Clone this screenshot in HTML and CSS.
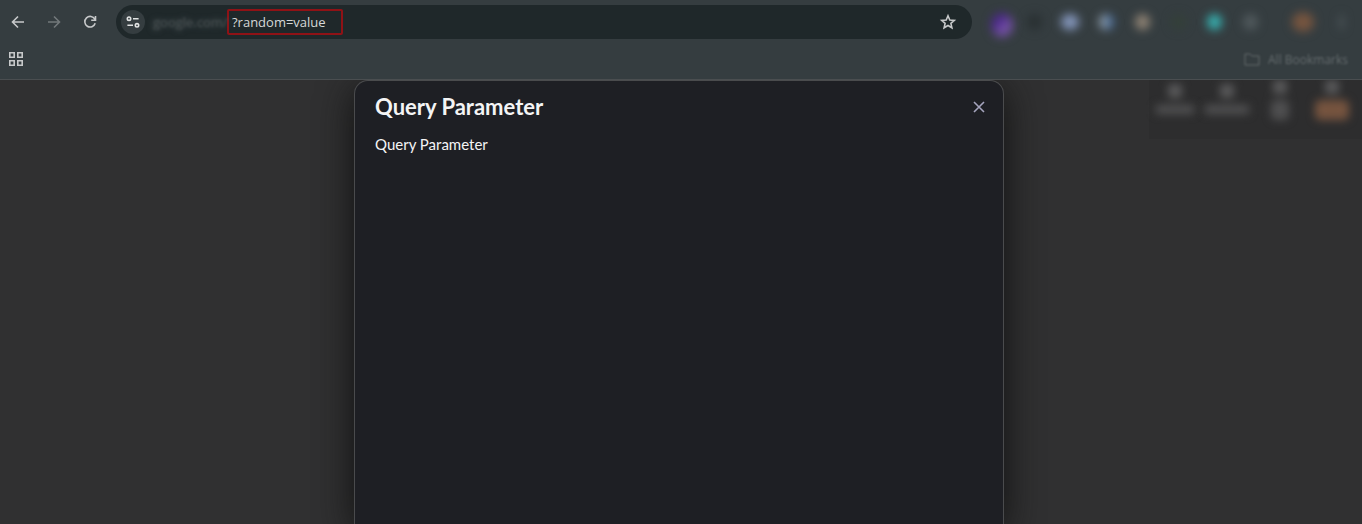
FILE: index.html
```html
<!DOCTYPE html>
<html lang="en">
<head>
  <meta charset="UTF-8">
  <title>Query Parameter</title>
  <link rel="stylesheet" href="styles.css">
</head>
<body>

  <header class="browser">
    <div class="toolbar">
      <button class="nav-btn" aria-label="Back">
        <svg width="16" height="16" viewBox="0 0 16 16"><path d="M14 8H3M8 2.5L2.5 8L8 13.5"/></svg>
      </button>
      <button class="nav-btn" aria-label="Forward" disabled>
        <svg width="16" height="16" viewBox="0 0 16 16"><path d="M2 8H13M8 2.5L13.5 8L8 13.5"/></svg>
      </button>
      <button class="nav-btn" aria-label="Reload">
        <svg width="16" height="16" viewBox="0 0 16 16"><path d="M12.8 5.2A5.3 5.3 0 1 0 13.2 9.3M13.5 2V6.3H9.2"/></svg>
      </button>

      <div class="omnibox">
        <button class="site-info" aria-label="Site information">
          <svg width="14" height="14" viewBox="0 0 14 14"><circle cx="3" cy="3.7" r="1.7"/><path d="M7 3.7H12.6M1.4 10.3H7"/><circle cx="11" cy="10.3" r="1.7"/></svg>
        </button>
        <span class="host">google.com/</span>
        <input class="query" type="text" value="?random=value" aria-label="Address">
        <button class="star" aria-label="Bookmark this page">
          <svg width="18" height="18" viewBox="0 0 18 18"><path d="M9 2.8L10.8 7L15.3 7.4L11.9 10.4L12.9 14.8L9 12.5L5.1 14.8L6.1 10.4L2.7 7.4L7.2 7Z"/></svg>
        </button>
      </div>

      <div class="extensions">
        <button class="ext" aria-label="Extension 1"><i class="dot purple"></i></button>
        <button class="ext" aria-label="Extension 2"><i class="dot dark"></i></button>
        <button class="ext" aria-label="Extension 3"><i class="dot blue"></i></button>
        <button class="ext" aria-label="Extension 4"><i class="dot half"></i></button>
        <button class="ext" aria-label="Extension 5"><i class="dot sand"></i></button>
        <button class="ext" aria-label="Extension 6"><i class="dot green"></i></button>
        <button class="ext" aria-label="Extension 7"><i class="dot teal"></i></button>
        <button class="ext" aria-label="Extensions"><i class="dot gray"></i></button>
        <button class="ext profile" aria-label="Profile"><i class="dot orange"></i></button>
        <button class="ext" aria-label="Menu"><i class="dot menu"></i></button>
      </div>
    </div>

    <div class="bookmarks">
      <button class="apps" aria-label="Apps">
        <svg width="14" height="14" viewBox="0 0 14 14"><path d="M.8 .8H5.2V5.2H.8ZM8.8 .8H13.2V5.2H8.8ZM.8 8.8H5.2V13.2H.8ZM8.8 8.8H13.2V13.2H8.8Z"/></svg>
      </button>
      <button class="all-bookmarks">
        <svg width="16" height="14" viewBox="0 0 16 14"><path d="M1 2H6L8 4H15V13H1Z"/></svg>
        <span>All Bookmarks</span>
      </button>
    </div>
  </header>

  <main class="page">
    <nav class="menu-bar">
      <a class="menu-item" href="#" aria-label="Menu item 1"><i class="mark"></i><i class="label"></i></a>
      <a class="menu-item" href="#" aria-label="Menu item 2"><i class="mark"></i><i class="label wide"></i></a>
      <a class="menu-item high" href="#" aria-label="Menu item 3"><i class="mark"></i><i class="block"></i></a>
      <a class="menu-item high" href="#" aria-label="Menu item 4"><i class="mark"></i><i class="block warm"></i></a>
    </nav>

    <section class="modal" role="dialog" aria-labelledby="modal-title">
      <div class="modal-head">
        <h1 id="modal-title">Query Parameter</h1>
        <button class="close" aria-label="Close">
          <svg width="12" height="12" viewBox="0 0 12 12"><path d="M1 1L11 11M11 1L1 11"/></svg>
        </button>
      </div>
      <p>Query Parameter</p>
    </section>
  </main>

</body>
</html>
```

FILE: styles.css
```css
* { box-sizing: border-box; }
body { margin: 0; min-height: 100vh; display: flex; flex-direction: column; overflow: hidden; background: #303031; font-family: Lato, sans-serif; }
button { display: flex; align-items: center; justify-content: center; padding: 0; border: none; background: none; color: #c7c9ca; cursor: pointer; }
svg { fill: none; stroke: currentColor; stroke-width: 1.6; }

/* browser bars */
.browser { background: #353d40; border-bottom: 1px solid #4a4e50; font-family: "Open Sans", sans-serif; }
.toolbar { display: flex; align-items: center; height: 44px; padding-right: 3px; }
.nav-btn { width: 36px; height: 36px; }
.nav-btn:disabled { color: #72787a; }
.omnibox { flex: 1; display: flex; align-items: center; height: 34px; margin-left: 8px; padding: 0 12px 0 5px; border-radius: 17px; background: #1f282a; }
.site-info { width: 24px; height: 24px; border-radius: 50%; background: #353d40; color: #e1e3e3; }
.host { margin-left: 8px; width: 74px; font-size: 13px; color: #424a4c; text-shadow: 0 0 6px #5d6567; filter: blur(1px); }
.query { width: 116px; height: 26px; padding: 0 3px; border: 2px solid #8f1216; border-radius: 2px; background: none; color: #d5d8d8; font: 13px "Open Sans", sans-serif; outline: none; }
.star { margin-left: auto; width: 24px; height: 24px; }

.extensions { display: flex; margin-left: 8px; }
.ext { width: 36px; height: 36px; }
.profile { margin-left: 17px; margin-right: 2px; }
.dot { width: 15px; height: 16px; border-radius: 50%; filter: blur(5px); }
.purple { width: 22px; height: 24px; margin: 6px 0 0 8px; background: linear-gradient(135deg, #4b288a 35%, #7350a4 60%); }
.dark { background: #293032; }
.blue { width: 18px; background: #8496bb; }
.half { background: linear-gradient(90deg, #8f9daa 45%, #4d709c 55%); }
.sand { background: #8f8374; }
.green { background: #344039; }
.teal { background: #37b0b0; }
.gray { background: #515a5d; }
.orange { width: 22px; height: 20px; background: #76553f; }
.menu { width: 5px; background: #4d5659; }

.bookmarks { display: flex; justify-content: space-between; height: 35px; padding: 0 14px 5px 4px; }
.apps { width: 24px; }
.all-bookmarks { gap: 8px; font: 12px "Open Sans", sans-serif; color: #646b6d; filter: blur(1px); }
.all-bookmarks svg { stroke-width: 1; }

/* page behind the dialog */
.page { position: relative; flex: 1; overflow: hidden; }
.menu-bar { display: flex; width: 213px; height: 59px; padding-right: 4px; margin-left: auto; background: #2d2d2e; }
.menu-item { display: flex; flex-direction: column; align-items: center; flex: 1; padding-top: 4px; filter: blur(4px); }
.high { padding-top: 0; }
.mark { width: 14px; height: 14px; border-radius: 4px; background: #59595a; }
.label { width: 38px; height: 9px; margin-top: 7px; background: #515152; }
.wide { width: 44px; }
.block { width: 18px; height: 20px; margin-top: 6px; border-radius: 5px; background: #4f4f50; }
.warm { width: 34px; height: 20px; background: #76543f; }

/* dialog */
.modal { position: absolute; inset: 0 4px auto 0; width: 650px; max-width: 100%; min-height: 100%; margin: 0 auto; padding: 12px 16px 20px 20px; border: 1px solid #4a4b4d; border-bottom: none; border-radius: 14px 14px 0 0; background: #1e1f24; color: #f4f4f5; box-shadow: 0 8px 36px #111; }
.modal-head { display: flex; align-items: center; justify-content: space-between; height: 28px; }
.modal h1 { margin: 0; font-size: 22px; line-height: 28px; font-weight: 700; }
.modal p { margin: 13px 0 0; font-size: 15px; line-height: 20px; }
.close { width: 16px; height: 16px; color: #a5a4bd; }
```
